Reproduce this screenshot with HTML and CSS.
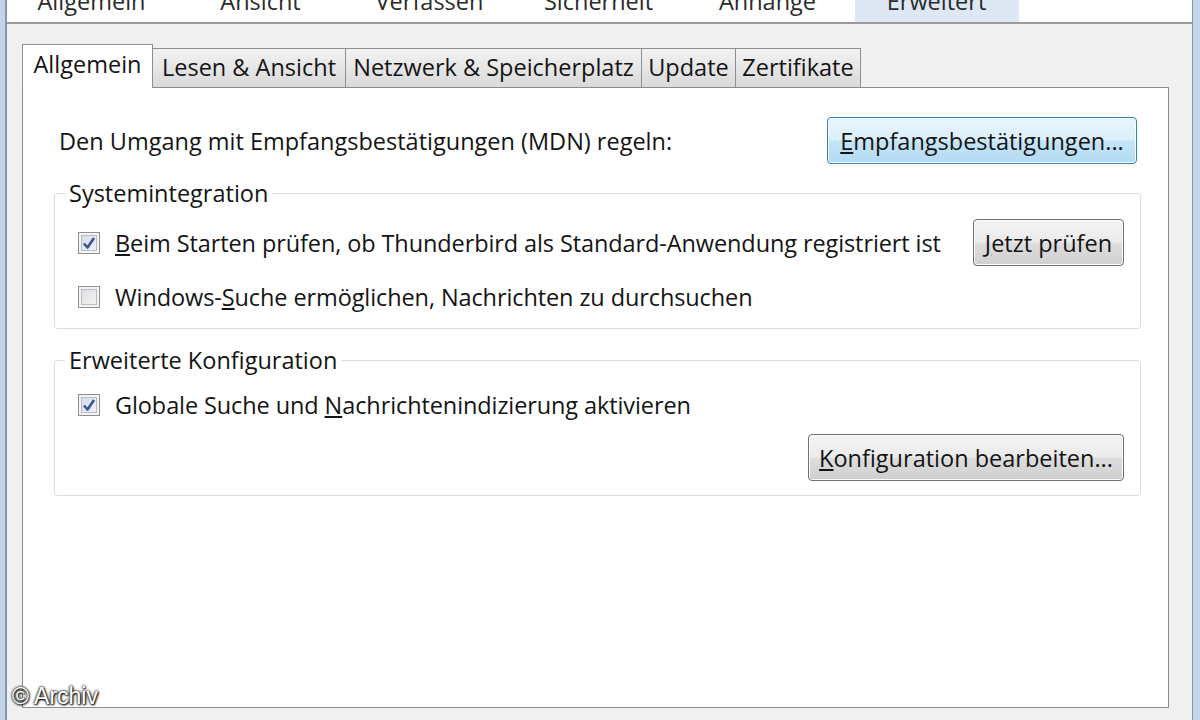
FILE: index.html
```html
<!DOCTYPE html>
<html lang="de">
<head>
    <meta charset="UTF-8">
    <title>Einstellungen - Erweitert</title>
    <link rel="stylesheet" href="styles.css">
</head>
<body>

<div class="window">
    <div class="frame">
        <!-- Obere Leiste mit den Kategorien -->
        <div class="toolbar">
            <div class="tool">Allgemein</div>
            <div class="tool">Ansicht</div>
            <div class="tool">Verfassen</div>
            <div class="tool">Sicherheit</div>
            <div class="tool">Anhänge</div>
            <div class="tool active">Erweitert</div>
        </div>

        <div class="client">
            <div class="tabs">
                <div class="tab selected tab-allgemein">Allgemein</div>
                <div class="tab tab-lesen">Lesen &amp; Ansicht</div>
                <div class="tab tab-netz">Netzwerk &amp; Speicherplatz</div>
                <div class="tab tab-update">Update</div>
                <div class="tab tab-zert">Zertifikate</div>
            </div>

            <div class="panel">
                <div class="row-mdn">
                    <span>Den Umgang mit Empfangsbestätigungen (MDN) regeln:</span>
                    <button class="btn btn-default btn-mdn"><u>E</u>mpfangsbestätigungen...</button>
                </div>

                <fieldset class="group group-system">
                    <legend>Systemintegration</legend>
                    <div class="check-row first">
                        <span class="check checked">
                            <svg viewBox="0 0 16 16" width="16" height="16"><path d="M3 8.5 L6.5 12.5 L13 3" fill="none" stroke="#3d5394" stroke-width="2.6" stroke-linejoin="round"/></svg>
                        </span>
                        <span class="label"><u>B</u>eim Starten prüfen, ob Thunderbird als Standard-Anwendung registriert ist</span>
                        <button class="btn btn-jetzt"><u>J</u>etzt prüfen</button>
                    </div>
                    <div class="check-row second">
                        <span class="check"></span>
                        <span class="label">Windows-<u>S</u>uche ermöglichen, Nachrichten zu durchsuchen</span>
                    </div>
                </fieldset>

                <fieldset class="group group-config">
                    <legend>Erweiterte Konfiguration</legend>
                    <div class="check-row simple">
                        <span class="check checked">
                            <svg viewBox="0 0 16 16" width="16" height="16"><path d="M3 8.5 L6.5 12.5 L13 3" fill="none" stroke="#3d5394" stroke-width="2.6" stroke-linejoin="round"/></svg>
                        </span>
                        <span class="label">Globale Suche und <u>N</u>achrichtenindizierung aktivieren</span>
                    </div>
                    <div class="button-row">
                        <button class="btn btn-config"><u>K</u>onfiguration bearbeiten...</button>
                    </div>
                </fieldset>
            </div>
        </div>
    </div>

    <div class="watermark">© Archiv</div>
</div>

</body>
</html>
```

FILE: styles.css
```css
body {
    margin: 0;
    font-family: "Open Sans", "Noto Sans", sans-serif;
    font-size: 23.5px;
    color: #141414;
    background-color: #f0f0f0;
}
.window {
    position: relative;
    height: 720px;
    display: flex;
    box-sizing: border-box;
    border-left: 5px solid #c3d5e9;
    border-right: 7px solid #c3d5e9;
    overflow: hidden;
}
.frame {
    flex: 1;
    display: flex;
    flex-direction: column;
    border-left: 2px solid #8597ae;
    border-right: 1px solid #8597ae;
}

/* Kategorien oben (abgeschnitten) */
.toolbar {
    height: 22px;
    display: flex;
    background-color: #fff;
    border-bottom: 2px solid #9b9b9b;
    overflow: hidden;
}
.tool {
    width: 169px;
    height: 32px;
    margin-top: -10px;
    line-height: 22px;
    text-align: center;
    color: #2a2a2a;
}
.tool.active {
    background-color: #dde8f4;
    box-shadow: inset 3px 0 #fff, inset -2px 0 #fff;
}

.client {
    flex: 1;
    display: flex;
    flex-direction: column;
    padding: 20px 23px 12px 15px;
}

/* Reiter */
.tabs {
    display: flex;
    align-items: flex-end;
    height: 43px;
    position: relative;
    z-index: 1;
}
.tab {
    height: 39px;
    box-sizing: border-box;
    border: 1px solid #8c8e94;
    border-bottom: none;
    border-left: none;
    text-align: center;
    line-height: 37px;
    white-space: nowrap;
    background: linear-gradient(#f2f2f2, #e6e6e6 50%, #d9d9d9);
    color: #141414;
}
.tab.selected {
    height: 44px;
    margin-bottom: -1px;
    border-left: 1px solid #8c8e94;
    background: #fff;
    line-height: 38px;
}
.tab-allgemein { width: 131px; }
.tab-lesen { width: 193px; }
.tab-netz { width: 296px; }
.tab-update { width: 94px; }
.tab-zert { width: 125px; }

.panel {
    flex: 1;
    background-color: #fff;
    border: 1px solid #898c95;
}

.row-mdn {
    display: flex;
    align-items: center;
    justify-content: space-between;
    margin: 29px 31px 0 36px;
}

/* Gruppenrahmen */
.group {
    margin: 15px 27px 0 31px;
    padding: 0 16px 17px 10px;
    border: 1px solid #d6dee4;
    border-radius: 3px;
}
.group legend {
    padding: 0 4px;
    line-height: 28px;
}
.group-config {
    margin-top: 17px;
    padding-bottom: 14px;
}

.check-row {
    display: flex;
    align-items: center;
    margin-left: 13px;
}
.check-row.first { margin-top: 12px; }
.check-row.second { margin-top: 17px; height: 28px; }
.check-row.simple { margin-top: 17px; height: 28px; }
.check-row .label {
    margin-left: 15px;
    flex: 1;
    white-space: nowrap;
    letter-spacing: -0.1px;
}
.check {
    width: 22px;
    height: 22px;
    box-sizing: border-box;
    border: 1px solid #8e8f8f;
    background: linear-gradient(135deg, #d9dadc, #f7f7f7);
    box-shadow: inset 0 0 0 2px #f4f4f4, inset 0 0 0 3px #b9bcc2;
    display: flex;
    align-items: center;
    justify-content: center;
}
.check.checked {
    background: linear-gradient(135deg, #d2d9e8, #f3f5fa);
}

.button-row {
    display: flex;
    justify-content: flex-end;
    margin-top: 15px;
}

/* Schaltflächen */
.btn {
    height: 47px;
    box-sizing: border-box;
    padding: 0 8px;
    font: inherit;
    color: #141414;
    white-space: nowrap;
    border: 1px solid #707070;
    border-radius: 4px;
    background: linear-gradient(#f3f3f3 0%, #ebebeb 48%, #dddddd 52%, #cfcfcf 100%);
    box-shadow: inset 0 0 0 1px #fbfbfb;
}
.btn-default {
    border-color: #3c7fb1;
    background: linear-gradient(#e8f5fc 0%, #dbeffb 48%, #c4e4f7 52%, #b3dbf2 100%);
    box-shadow: inset 0 0 0 1px #f2fafe;
}
.btn-mdn { width: 310px; }
.btn-jetzt { width: 151px; }
.btn-config { width: 316px; }

.watermark {
    position: absolute;
    left: 7px;
    bottom: 10px;
    font-family: "Liberation Sans", Arial, sans-serif;
    font-size: 23px;
    color: #fff;
    text-shadow: 0 0 3px #000, 0 0 2px #333, 1px 1px 2px #000;
}
```
